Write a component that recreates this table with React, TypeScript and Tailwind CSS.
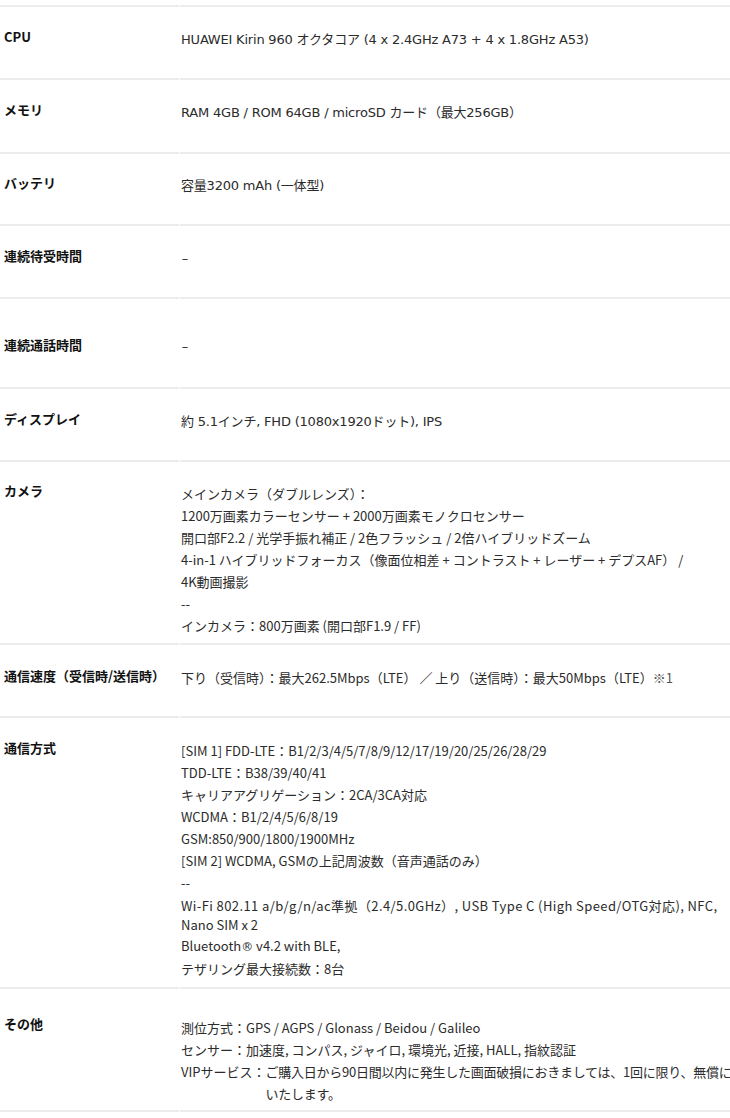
import type { ReactNode } from "react";

type Row = {
  label: string;
  height: number;
  labelPad: string;
  valuePad: string;
  wide?: boolean;
  lines: ReactNode[];
};

const dash = <span className="inline-block w-[8px] text-center">–</span>;

const rows: Row[] = [
  {
    label: "CPU",
    height: 73,
    labelPad: "pt-[19px]",
    valuePad: "pt-[22px]",
    wide: true,
    lines: ["HUAWEI Kirin 960 オクタコア (4 x 2.4GHz A73 + 4 x 1.8GHz A53)"],
  },
  {
    label: "メモリ",
    height: 74,
    labelPad: "pt-[19px]",
    valuePad: "pt-[22px]",
    wide: true,
    lines: ["RAM 4GB / ROM 64GB / microSD カード（最大256GB）"],
  },
  {
    label: "バッテリ",
    height: 72,
    labelPad: "pt-[18px]",
    valuePad: "pt-[21px]",
    wide: true,
    lines: ["容量3200 mAh (一体型)"],
  },
  {
    label: "連続待受時間",
    height: 73,
    labelPad: "pt-[19px]",
    valuePad: "pt-[22px]",
    wide: true,
    lines: [dash],
  },
  {
    label: "連続通話時間",
    height: 90,
    labelPad: "pt-[35px]",
    valuePad: "pt-[37px]",
    wide: true,
    lines: [dash],
  },
  {
    label: "ディスプレイ",
    height: 73,
    labelPad: "pt-[19px]",
    valuePad: "pt-[22px]",
    wide: true,
    lines: ["約 5.1インチ, FHD (1080x1920ドット), IPS"],
  },
  {
    label: "カメラ",
    height: 183,
    labelPad: "pt-[18px]",
    valuePad: "pt-[21px]",
    lines: [
      "メインカメラ（ダブルレンズ）：",
      "1200万画素カラーセンサー + 2000万画素モノクロセンサー",
      "開口部F2.2 / 光学手振れ補正 / 2色フラッシュ / 2倍ハイブリッドズーム",
      "4-in-1 ハイブリッドフォーカス（像面位相差 + コントラスト + レーザー + デプスAF） /",
      "4K動画撮影",
      "--",
      "インカメラ：800万画素 (開口部F1.9 / FF)",
    ],
  },
  {
    label: "通信速度（受信時/送信時）",
    height: 73,
    labelPad: "pt-[20px]",
    valuePad: "pt-[22px]",
    lines: [
      <>
        下り（受信時）：最大262.5Mbps（LTE） ／ 上り（送信時）：最大50Mbps（LTE）
        <span className="text-[#555]">※1</span>
      </>,
    ],
  },
  {
    label: "通信方式",
    height: 271,
    labelPad: "pt-[19px]",
    valuePad: "pt-[22px]",
    lines: [
      "[SIM 1] FDD-LTE：B1/2/3/4/5/7/8/9/12/17/19/20/25/26/28/29",
      "TDD-LTE：B38/39/40/41",
      "キャリアアグリゲーション：2CA/3CA対応",
      "WCDMA：B1/2/4/5/6/8/19",
      "GSM:850/900/1800/1900MHz",
      "[SIM 2] WCDMA, GSMの上記周波数（音声通話のみ）",
      "--",
      <div className="leading-[19px] py-[1.5px]">
        <span className="tracking-[0.4px]">
          Wi-Fi 802.11 a/b/g/n/ac準拠（2.4/5.0GHz）, USB Type C (High Speed/OTG対応), NFC,
        </span>
        <br />
        Nano SIM x 2
      </div>,
      <>
        Bluetooth<span className="font-['DejaVu_Sans',sans-serif] text-[12px]">®</span> v4.2 with BLE,
      </>,
      "テザリング最大接続数：8台",
    ],
  },
  {
    label: "その他",
    height: 123,
    labelPad: "pt-[24px]",
    valuePad: "pt-[28px]",
    lines: [
      "測位方式：GPS / AGPS / Glonass / Beidou / Galileo",
      "センサー：加速度, コンパス, ジャイロ, 環境光, 近接, HALL, 指紋認証",
      <div className="flex">
        <span className="shrink-0">VIPサービス：</span>
        <span className="whitespace-nowrap tracking-[-0.25px]">
          ご購入日から90日間以内に発生した画面破損におきましては、1回に限り、無償に
          <br />
          いたします。
        </span>
      </div>,
    ],
  },
];

function SpecRow({ row }: { row: Row }) {
  return (
    <div className="flex" style={{ height: row.height }}>
      <div
        className={`w-[179px] shrink-0 border-b-2 border-[#ececec] pl-[4px] text-[13px] leading-[22px] font-bold text-[#111] ${row.labelPad}`}
      >
        {row.label}
      </div>
      <div
        className={`ml-[1px] flex-1 overflow-hidden border-b-2 border-[#ececec] pl-[1px] text-[13px] leading-[22px] text-[#2b2b2b] ${row.valuePad} ${
          row.wide ? "font-['DejaVu_Sans','Noto_Sans_CJK_JP',sans-serif] tracking-[-0.2px]" : ""
        }`}
      >
        {row.lines.map((line, i) => (
          <div key={i}>{line}</div>
        ))}
      </div>
    </div>
  );
}

export default function App() {
  return (
    <div
      className="w-[730px] h-[1118px] overflow-hidden bg-white"
      style={{ fontFamily: '"Noto Sans CJK JP", "Noto Sans", sans-serif' }}
    >
      <div className="flex h-[7px]">
        <div className="w-[179px] border-b-2 border-[#ececec]" />
        <div className="ml-[1px] flex-1 border-b-2 border-[#ececec]" />
      </div>
      {rows.map((row) => (
        <SpecRow key={row.label} row={row} />
      ))}
    </div>
  );
}
